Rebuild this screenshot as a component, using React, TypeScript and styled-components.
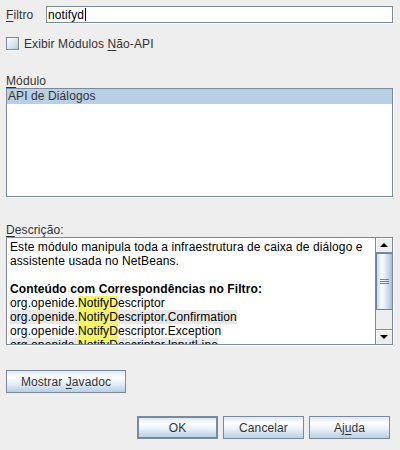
import React from "react";
import styled, { createGlobalStyle } from "styled-components";

const Global = createGlobalStyle`
  html, body { margin: 0; padding: 0; background: #eeeeee; }
  body { font-family: "Liberation Sans", Arial, sans-serif; font-size: 12px; letter-spacing: 0.1px; color: #333333; }
`;

const Dialog = styled.div`
  width: 400px;
  height: 450px;
  box-sizing: border-box;
  padding: 6px 6px 0 6px;
  display: flex;
  flex-direction: column;
  background: #eeeeee;
`;

const FilterRow = styled.div`
  display: flex;
  align-items: center;
  height: 17px;
`;

const Label = styled.span`
  display: block;
  line-height: 14px;
  height: 14px;
  color: #333333;
  white-space: nowrap;
`;

const FieldLabel = styled(Label)`
  width: 40px;
`;

const U = styled.span`
  text-decoration: underline;
  text-underline-offset: 2px;
`;

const TextField = styled.div`
  flex: 1;
  height: 17px;
  box-sizing: border-box;
  margin-right: 1px;
  border: 1px solid #7a8a99;
  box-shadow: 1px 1px 0 #ffffff;
  background: #ffffff;
  display: flex;
  align-items: center;
  padding-left: 1px;
  color: #000;
  line-height: 14px;
`;

const Caret = styled.span`
  display: inline-block;
  width: 1px;
  height: 13px;
  background: #000;
  margin-left: 1px;
`;

const CheckRow = styled.div`
  display: flex;
  align-items: center;
  gap: 5px;
  margin-top: 14px;
  height: 13px;
`;

const Box = styled.span`
  width: 13px;
  height: 13px;
  box-sizing: border-box;
  border: 1px solid #7a8a99;
  background: linear-gradient(135deg, #ffffff 0%, #dde8f3 50%, #b8cfe5 100%);
  box-shadow: 1px 1px 0 #ffffff;
`;

const SectionLabel = styled(Label)<{ $top: number }>`
  margin-top: ${(p) => p.$top}px;
`;

const ListBox = styled.div`
  height: 109px;
  box-sizing: border-box;
  margin-right: 1px;
  border: 1px solid #7a8a99;
  box-shadow: 1px 1px 0 #ffffff;
  background: #ffffff;
`;

const ListRow = styled.div<{ $selected?: boolean }>`
  height: 15px;
  line-height: 15px;
  padding-left: 1px;
  color: #333333;
  background: ${(p) => (p.$selected ? "#b8cfe5" : "transparent")};
`;

const DescBox = styled.div`
  height: 108px;
  box-sizing: border-box;
  margin-right: 1px;
  border: 1px solid #7a8a99;
  box-shadow: 1px 1px 0 #ffffff;
  background: #ffffff;
  display: flex;
  overflow: hidden;
`;

const DescText = styled.div`
  flex: 1;
  padding: 2px 3px 0 3px;
  color: #000000;
  line-height: 14px;
  overflow: hidden;
  white-space: nowrap;
`;

const Line = styled.div`
  height: 14px;
`;

const Bold = styled.div`
  height: 14px;
  font-weight: bold;
`;

const Match = styled.span<{ $shade?: boolean }>`
  display: inline-block;
  height: 14px;
  background: ${(p) => (p.$shade ? "#e8e8e8" : "transparent")};
`;

const Hl = styled.span`
  background: #f4f46c;
`;

const ScrollBar = styled.div`
  width: 16px;
  border-left: 1px solid #7a8a99;
  display: flex;
  flex-direction: column;
  background: #eeeeee;
`;

const ArrowBtn = styled.div<{ $down?: boolean }>`
  height: 15px;
  box-sizing: border-box;
  display: flex;
  align-items: center;
  justify-content: center;
  background: #eeeeee;
  box-shadow: inset 1px 1px 0 #ffffff;
  ${(p) => (p.$down ? "border-top: 1px solid #7a8a99;" : "border-bottom: 1px solid #7a8a99;")}
`;

const Thumb = styled.div`
  height: 57px;
  box-sizing: border-box;
  border: 1px solid #6382bf;
  border-right: none;
  background: linear-gradient(90deg, #c8d8ee 0%, #ffffff 30%, #dce7f5 60%, #a3bde0 100%);
  display: flex;
  flex-direction: column;
  align-items: center;
  justify-content: center;
  gap: 1px;
`;

const Grip = styled.span`
  width: 9px;
  height: 1px;
  background: #6382bf;
`;

const Track = styled.div`
  flex: 1;
  background: #eeeeee;
`;

const Button = styled.div<{ $default?: boolean; $w: number }>`
  width: ${(p) => p.$w}px;
  height: 23px;
  box-sizing: border-box;
  border: ${(p) => (p.$default ? "2px" : "1px")} solid #7a8a99;
  background: linear-gradient(180deg, #dde8f3 0%, #ffffff 30%, #e6eef7 60%, #b8cfe5 100%);
  display: flex;
  align-items: center;
  justify-content: center;
  color: #333333;
  white-space: nowrap;
`;

const JavadocRow = styled.div`
  margin-top: 25px;
  display: flex;
`;

const ButtonBar = styled.div`
  margin-top: 23px;
  margin-right: 4px;
  display: flex;
  justify-content: flex-end;
  gap: 5px;
`;

const Tri = ({ down }: { down?: boolean }) => (
  <svg width="8" height="5" viewBox="0 0 8 5">
    <polygon points={down ? "0,0 8,0 4,4" : "0,4 8,4 4,0"} fill="#000" />
  </svg>
);

const Mono = ({ shade, rest }: { shade?: boolean; rest: string }) => (
  <Line>
    <Match $shade={shade}>
      org.openide.<Hl>NotifyD</Hl>
      {rest}
    </Match>
  </Line>
);

export default function App() {
  return (
    <>
      <Global />
      <Dialog>
        <FilterRow>
          <FieldLabel>
            <U>F</U>iltro
          </FieldLabel>
          <TextField>
            notifyd
            <Caret />
          </TextField>
        </FilterRow>
        <CheckRow>
          <Box />
          <Label>
            Exibir Módulos <U>N</U>ão-API
          </Label>
        </CheckRow>
        <SectionLabel $top={24}>
          <U>M</U>ódulo
        </SectionLabel>
        <ListBox>
          <ListRow $selected>API de Diálogos</ListRow>
        </ListBox>
        <SectionLabel $top={26}>
          <U>D</U>escrição:
        </SectionLabel>
        <DescBox>
          <DescText>
            <Line>Este módulo manipula toda a infraestrutura de caixa de diálogo e</Line>
            <Line>assistente usada no NetBeans.</Line>
            <Line />
            <Bold>Conteúdo com Correspondências no Filtro:</Bold>
            <Mono rest="escriptor" />
            <Mono shade rest="escriptor.Confirmation" />
            <Mono rest="escriptor.Exception" />
            <Mono shade rest="escriptor.InputLine" />
          </DescText>
          <ScrollBar>
            <ArrowBtn>
              <Tri />
            </ArrowBtn>
            <Thumb>
              <Grip />
              <Grip />
              <Grip />
            </Thumb>
            <Track />
            <ArrowBtn $down>
              <Tri down />
            </ArrowBtn>
          </ScrollBar>
        </DescBox>
        <JavadocRow>
          <Button $w={120}>
            <span>
              Mostrar <U>J</U>avadoc
            </span>
          </Button>
        </JavadocRow>
        <ButtonBar>
          <Button $w={81} $default>
            OK
          </Button>
          <Button $w={81}>Cancelar</Button>
          <Button $w={81}>
            <span>
              Aj<U>u</U>da
            </span>
          </Button>
        </ButtonBar>
      </Dialog>
    </>
  );
}
